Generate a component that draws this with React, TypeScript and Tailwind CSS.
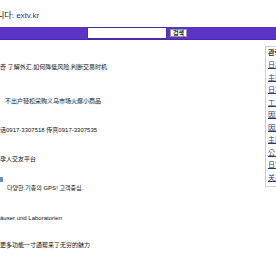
import React from "react";

const items: { text: string; mt: string; ml: string; icon?: boolean }[] = [
  { text: "奇 了解外汇,如何降低风险,判断交易时机", mt: "mt-[23px]", ml: "ml-0" },
  { text: "不出户轻松采购义乌市场火爆小商品", mt: "mt-[26px]", ml: "ml-[5px]" },
  { text: "话0917-3307518 传真0917-3307535", mt: "mt-[21px]", ml: "ml-0" },
  { text: "孕人交友平台", mt: "mt-[21px]", ml: "ml-0" },
  { text: "다양한 기종의 GPS! 고객중심.", mt: "mt-[21px]", ml: "ml-[7px]", icon: true },
  { text: "äuser und Laboratorien", mt: "mt-[22px]", ml: "ml-0" },
  { text: "更多功能一寸通帮来了无穷的魅力", mt: "mt-[19px]", ml: "ml-0" },
];

const side = ["日本", "主要", "日本", "工业", "因为", "因此", "主题", "公司", "日常", "关系"];

export default function App() {
  return (
    <div
      className="w-[276px] h-[260px] overflow-hidden bg-white text-[#111]"
      style={{ fontFamily: '"Liberation Sans", "Noto Sans CJK KR", "Noto Sans CJK SC", sans-serif' }}
    >
      <div className="h-[27px] pt-[11px] text-[8px] leading-[10px] whitespace-nowrap -ml-[3px]">
        <span className="text-[#111]">니다: </span>
        <span className="text-[#1b3a9e]">extv.kr</span>
      </div>
      <div className="h-[13px] bg-[#5b34c6] flex items-center border-b border-[#4a28a8]">
        <div className="ml-[87px] w-[80px] h-[12px] bg-white border border-[#4a2aa8]" />
        <div className="ml-[3px] h-[8px] px-[2px] bg-white border border-[#999] text-[6px] leading-[6px] font-bold text-[#222] flex items-center">
          검색
        </div>
      </div>
      <div className="flex">
        <div className="w-[265px] shrink-0">
          {items.map((it, i) => (
            <div key={i} className={`${it.mt} relative h-[8px] text-[6px] leading-[8px] whitespace-nowrap`}>
              {it.icon && (
                <div className="absolute left-0 -top-[7px] w-[3px] h-[5px] bg-[#6a8fd0]" />
              )}
              <span className={`${it.ml} inline-block`}>{it.text}</span>
            </div>
          ))}
        </div>
        <div className="mt-[6px] h-[141px] border border-r-0 border-[#d0d0d0] pl-[2px] pt-[1px] w-[40px] shrink-0">
          <div className="text-[7px] leading-[9px] font-bold text-[#222] whitespace-nowrap">관련</div>
          <div className="flex flex-col gap-[4.5px] mt-[4px]">
            {side.map((s, i) => (
              <div key={i} className="text-[7px] leading-[8px] text-[#2a3a6a] underline whitespace-nowrap">
                {s}
              </div>
            ))}
          </div>
        </div>
      </div>
    </div>
  );
}
